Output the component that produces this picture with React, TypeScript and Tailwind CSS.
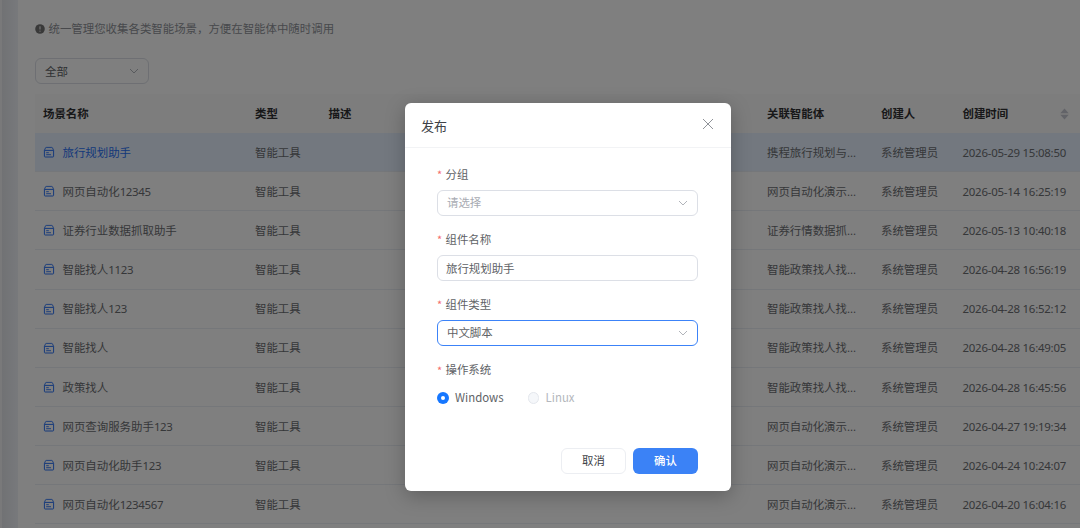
import { useState } from 'react';
import type { ReactNode } from 'react';

const agents = {
  travel: '携程旅行规划与...',
  web: '网页自动化演示...',
  stock: '证券行情数据抓...',
  policy: '智能政策找人找...',
};

const rows = [
  { name: '旅行规划助手', no: '', agent: agents.travel, time: '2026-05-29 15:08:50' },
  { name: '网页自动化', no: '12345', agent: agents.web, time: '2026-05-14 16:25:19' },
  { name: '证券行业数据抓取助手', no: '', agent: agents.stock, time: '2026-05-13 10:40:18' },
  { name: '智能找人', no: '1123', agent: agents.policy, time: '2026-04-28 16:56:19' },
  { name: '智能找人', no: '123', agent: agents.policy, time: '2026-04-28 16:52:12' },
  { name: '智能找人', no: '', agent: agents.policy, time: '2026-04-28 16:49:05' },
  { name: '政策找人', no: '', agent: agents.policy, time: '2026-04-28 16:45:56' },
  { name: '网页查询服务助手', no: '123', agent: agents.web, time: '2026-04-27 19:19:34' },
  { name: '网页自动化助手', no: '123', agent: agents.web, time: '2026-04-24 10:24:07' },
  { name: '网页自动化', no: '1234567', agent: agents.web, time: '2026-04-20 16:04:16' },
];

const GRID = 'grid grid-cols-[212px_73.5px_438.5px_114px_81.5px_1fr] items-center pl-2';

function ChevronDown({ className }: { className?: string }) {
  return (
    <svg viewBox="0 0 10 10" fill="none" stroke="currentColor" className={`size-[10px] ${className ?? ''}`}>
      <path d="M1 3l4 4 4-4" strokeWidth="0.9" />
    </svg>
  );
}

function SceneIcon() {
  return (
    <svg viewBox="0 0 12 12" fill="none" stroke="#2a72f5" className="mb-px size-3 shrink-0">
      <path d="M1.4 4.4h9.2v5.9q0 .7-.7.7H2.1q-.7 0-.7-.7z" strokeWidth="1" />
      <path d="M1.4 4.4L2.5 1.9q.2-.5.7-.5h5.6q.5 0 .7.5l1.1 2.5" strokeWidth="0.9" />
      <path d="M3.2 6.7h2.6M3.2 8.7h4.8" strokeWidth="0.9" />
    </svg>
  );
}

function Field({ label, children }: { label: string; children: ReactNode }) {
  return (
    <div className="flex flex-col">
      <div className="flex h-[26px] items-center pb-[4px] leading-none text-[#606266]">
        <span className="mr-[4.5px] w-1 text-[11px] text-[#f56c6c]">*</span>
        {label}
      </div>
      {children}
    </div>
  );
}

function SceneTable() {
  return (
    <div className="mt-[10px] w-[1060px]">
      <div className={`${GRID} h-[39px] bg-[#fafafa] font-bold text-[#303133]`}>
        <span>场景名称</span>
        <span>类型</span>
        <span>描述</span>
        <span>关联智能体</span>
        <span>创建人</span>
        <span className="flex items-center">
          创建时间
          <svg viewBox="0 0 9 12" fill="#c4c7d0" className="ml-[52px] h-3 w-[9px]">
            <path d="M0.3 5.3L4.5 0.5l4.2 4.8zM0.3 6.7h8.4L4.5 11.5z" />
          </svg>
        </span>
      </div>
      {rows.map((row, i) => (
        <div
          key={row.time}
          className={`${GRID} h-[39.14px] border-b border-[#ebeef5] pt-px text-[#6c6e72] ${i === 0 ? 'bg-[#e6f1ff]' : ''}`}
        >
          <span className={`flex items-center ${i === 0 ? 'text-[#2a72f5]' : ''}`}>
            <SceneIcon />
            <span className="ml-[7.5px]">{row.name}</span>
            <span className="tracking-[-0.3px]">{row.no}</span>
          </span>
          <span>智能工具</span>
          <span />
          <span>{row.agent}</span>
          <span>系统管理员</span>
          <span className="tracking-[-0.23px]">{row.time}</span>
        </div>
      ))}
    </div>
  );
}

function PublishDialog() {
  const [name, setName] = useState('旅行规划助手');

  return (
    <div className="h-[387.5px] w-[326px] rounded-[6px] bg-white font-['Noto_Sans_CJK_SC',sans-serif] shadow-[0_5px_20px_rgba(0,0,0,0.25)]">
      <div className="flex h-[45px] items-center justify-between border-b border-[#f2f3f5] pr-[17px] pl-[16.5px]">
        <span className="text-[13px] text-[#404247]">发布</span>
        <svg viewBox="0 0 12 12" fill="none" stroke="#909399" className="mb-[3px] size-3">
          <path d="M1 1l10 10M11 1L1 11" strokeWidth="1" />
        </svg>
      </div>
      <div className="flex flex-col gap-[13.2px] px-[32.5px] pt-[15.6px]">
        <Field label="分组">
          <div className="flex h-[26px] items-center justify-between rounded-[6px] border border-[#dcdfe6] pr-[9.5px] pl-[9px] text-[#a8abb2]">
            请选择
            <ChevronDown />
          </div>
        </Field>
        <Field label="组件名称">
          <input
            value={name}
            onChange={(e) => setName(e.target.value)}
            className="h-[26px] rounded-[6px] border border-[#dcdfe6] px-2 text-[#606266] outline-none"
          />
        </Field>
        <Field label="组件类型">
          <div className="flex h-[26px] items-center justify-between rounded-[6px] border border-[#3c83f8] pr-[9.5px] pl-[9px] text-[#606266]">
            中文脚本
            <ChevronDown className="text-[#a8abb2]" />
          </div>
        </Field>
        <Field label="操作系统">
          <div className="flex h-[26px] items-center text-[#606266]">
            <span className="mr-[6.5px] flex size-[11.5px] items-center justify-center rounded-full bg-[#1677ff]">
              <span className="size-[3.5px] rounded-full bg-white" />
            </span>
            Windows
            <span className="mr-[6.5px] ml-6 size-[11.5px] rounded-full border border-[#e4e7ed] bg-[#f5f7fa]" />
            <span className="text-[#b4b7bd]">Linux</span>
          </div>
        </Field>
      </div>
      <div className="mt-[37px] flex justify-end gap-[7px] pr-[32.5px]">
        <button className="h-[26px] w-[65px] rounded-[6px] border border-[#eceef2] text-[#404247]">取消</button>
        <button className="h-[26px] w-[65px] rounded-[6px] bg-[#3b82f6] font-medium text-white">确认</button>
      </div>
    </div>
  );
}

export default function App() {
  return (
    <div className="relative h-[528px] w-[1080px] overflow-hidden bg-white text-[11.43px] leading-none">
      <div className="flex h-full font-['Noto_Sans','Noto_Sans_CJK_SC',sans-serif]">
        <div className="w-[18px] shrink-0 border-l-2 border-[#f2f3f5] bg-linear-to-r from-[#e2e4e9] to-[#f0f3f8]" />
        <div className="flex-1 pt-[21px] pl-[17px]">
          <div className="flex h-[15px] items-center text-[#909399]">
            <svg viewBox="0 0 10 10" className="mr-[3.5px] size-[10px]">
              <circle cx="5" cy="5" r="4.8" fill="#737373" />
              <path d="M5 2.3v3.2M5 6.7v1" stroke="#fff" strokeWidth="1" />
            </svg>
            统一管理您收集各类智能场景，方便在智能体中随时调用
          </div>
          <div className="mt-[22px] flex h-[26px] w-[114px] items-center justify-between rounded-[6px] border border-[#dcdfe6] pr-[9.5px] pl-[9px] text-[#606266]">
            <span className="pt-px">全部</span>
            <ChevronDown className="text-[#a8abb2]" />
          </div>
          <SceneTable />
        </div>
      </div>
      <div className="absolute inset-0 bg-black/50 pt-[103px] pl-[404.5px]">
        <PublishDialog />
      </div>
    </div>
  );
}
